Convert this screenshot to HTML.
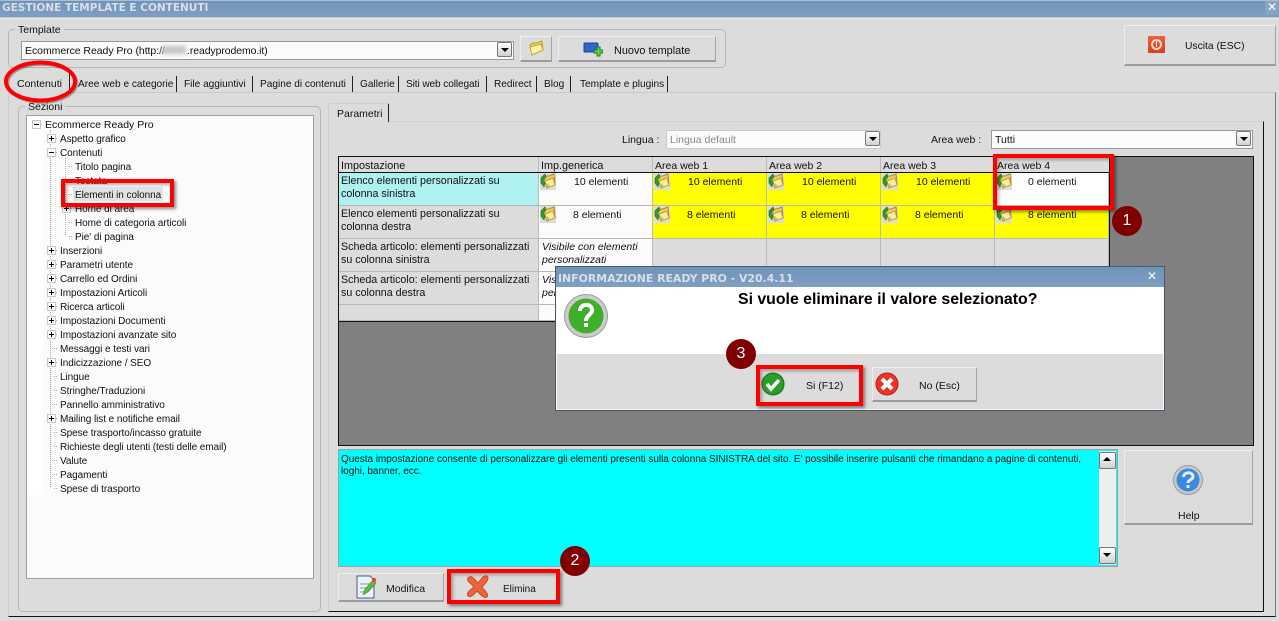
<!DOCTYPE html>
<html><head><meta charset="utf-8"><style>
html,body{margin:0;padding:0;width:1279px;height:621px;overflow:hidden;background:#dcdcdc}
body{position:relative;font:10.5px/14px "Liberation Sans",sans-serif;color:#111}
div,span,svg{position:absolute;box-sizing:border-box}
span{white-space:nowrap}
.w{left:0;top:0;width:0;height:0}
.btn{background:#dcdcdc;border-style:solid;border-width:1px 1px 2px 1px;border-color:#efefef #a3a3a3 #9c9c9c #efefef}
.red{border:4px solid #f00;box-shadow:2px 2px 3px rgba(0,0,0,.45),inset 2px 2px 3px rgba(0,0,0,.3)}
.badge{width:30px;height:30px;border-radius:50%;background:#800000;color:#fff;font-size:16px;line-height:29px;text-align:center}
.arr{width:15px;height:15px;border:1px solid #777;border-radius:2px;background:linear-gradient(#fff,#d0d0d0)}
.arr:after{content:"";position:absolute;left:3px;top:5px;border:4px solid transparent;border-top:4px solid #000;border-bottom:0}
.up:after{border-top:0;border-bottom:4px solid #000;top:4px}
.c{border-right:1px solid #b9b9b9;border-bottom:1px solid #b9b9b9}
.tab{top:76px;height:16px;border-right:1px solid #222}
.ic{width:16px;height:17px;background:#dcdcdc}
</style></head><body>
<svg width="0" height="0" style="left:0;top:0"><defs>
<symbol id="fold" viewBox="0 0 16 17"><path d="M4 6 L6 3 L9 3 L14 1 L15 11 L7 15 Z" fill="#e9cf66" stroke="#b88a1e"/><path d="M5 8 L13 5 L15 12 L7 15 Z" fill="#f8ef9e" stroke="#c79a2a"/><path d="M5 1 L1 5 L1 10 L4 14 L5 10 L3 7 L6 4 Z" fill="#2f9e2f" stroke="#1c6f1c" stroke-width=".6"/><path d="M7 10 L10 13 L7 14 Z" fill="#9ecf72"/></symbol>
</defs></svg>

<!-- title bar -->
<div style="left:0;top:0;width:1279px;height:19px;background:linear-gradient(#a9bdd4 0,#a9bdd4 1px,#6f93ba 1px,#7f9fc2 17px,#eee 18px)"></div>
<span style="left:2px;top:1px;font:bold 10.5px/15px 'DejaVu Sans',sans-serif;color:#d8dfe8">GESTIONE TEMPLATE E CONTENUTI</span>
<div style="left:1265px;top:1px;width:13px;height:13px;background:#8aa6c6"></div>
<span style="left:1267px;top:0;font:bold 12px/14px 'DejaVu Sans',sans-serif;color:#fff">✕</span>

<!-- template group -->
<div style="left:8px;top:29px;width:718px;height:39px;border:1px solid #b5b5b5;border-radius:5px"></div>
<span style="left:15px;top:23px;background:#dcdcdc;padding:0 3px">Template</span>
<div style="left:21px;top:41px;width:493px;height:19px;background:#fbfbfb;border:1px solid #999"></div>
<span style="left:25px;top:44px;letter-spacing:-.05px">Ecommerce Ready Pro (http://</span>
<div style="left:162px;top:46px;width:24px;height:8px;background:#c4c4c4;filter:blur(2px)"></div>
<span style="left:187px;top:44px;letter-spacing:-.1px">.readyprodemo.it)</span>
<div class="arr" style="left:497px;top:42px"></div>
<div class="btn" style="left:520px;top:36px;width:32px;height:26px"></div>
<svg style="left:528px;top:40px" width="16" height="16" viewBox="0 0 16 16"><path d="M2 5 L5 3 L8 3 L14 1 L15 10 L4 15 Z" fill="#e8cf5e" stroke="#c8981e"/><path d="M2 7 L13 4 L15 10 L4 15 Z" fill="#fbf2a6" stroke="#d3a62c"/></svg>
<div class="btn" style="left:558px;top:36px;width:158px;height:26px"></div>
<svg style="left:583px;top:42px" width="20" height="16" viewBox="0 0 20 16"><rect x="1" y="1" width="14" height="9" rx="1" fill="#2b68c8" stroke="#1d3f8a"/><path d="M11 8h3V5h3v3h3v3h-3v3h-3v-3h-3z" fill="#5fd14a" stroke="#1f7d1f"/></svg>
<span style="left:614px;top:44px;font-size:10.9px">Nuovo template</span>

<!-- exit -->
<div class="btn" style="left:1124px;top:25px;width:152px;height:41px"></div>
<div style="left:1148px;top:36px;width:17px;height:17px;background:linear-gradient(#f0603a,#d8401f);border-radius:1px"></div>
<div style="left:1151px;top:39px;width:11px;height:11px;border:2px solid #fbd8cc;border-radius:50%"></div>
<div style="left:1156px;top:41px;width:1px;height:6px;background:#fff"></div>
<span style="left:1185px;top:40px;font-size:10.3px">Uscita (ESC)</span>

<!-- outer page -->
<div style="left:8px;top:92px;width:1268px;height:525px;border:1px solid #cacaca;border-right-color:#777;border-bottom:1px solid #111"></div>

<!-- tabs -->
<div class="tab" style="left:8px;top:73px;width:62px;height:20px;background:#dcdcdc"></div>
<div class="tab" style="left:72px;width:105px"></div>
<div class="tab" style="left:178px;width:75px"></div>
<div class="tab" style="left:254px;width:99px"></div>
<div class="tab" style="left:354px;width:45px"></div>
<div class="tab" style="left:400px;width:87px"></div>
<div class="tab" style="left:488px;width:49px"></div>
<div class="tab" style="left:538px;width:33px"></div>
<div class="tab" style="left:572px;width:96px"></div>
<div class="w" style="font-size:10.1px">
<span style="left:17px;top:77px;font-size:10.5px">Contenuti</span>
<span style="left:78px;top:78px">Aree web e categorie</span>
<span style="left:184px;top:78px">File aggiuntivi</span>
<span style="left:260px;top:78px">Pagine di contenuti</span>
<span style="left:360px;top:78px">Gallerie</span>
<span style="left:406px;top:78px;letter-spacing:-.1px">Siti web collegati</span>
<span style="left:494px;top:78px">Redirect</span>
<span style="left:544px;top:78px">Blog</span>
<span style="left:580px;top:78px">Template e plugins</span>
</div>

<!-- sections -->
<div style="left:18px;top:106px;width:303px;height:506px;border:1px solid #b5b5b5;border-radius:5px"></div>
<span style="left:25px;top:100px;background:#dcdcdc;padding:0 3px">Sezioni</span>
<div style="left:26px;top:115px;width:288px;height:464px;background:#fbfbfb;border:1px solid #a0a0a0"></div>
<div style="left:27px;top:116px;width:16px;height:379px;background:#fff"></div>

<svg style="left:26px;top:115px" width="100" height="390" viewBox="26 115 100 390">
<g stroke="#aaa" stroke-dasharray="1 1" fill="none">
<path d="M50.5 130V488M65.5 158V236M39 124.5h4M54 138.500h4M54 152.500h4M69 166.500h4M69 180.500h4M69 194.500h4M69 208.500h4M69 222.500h4M69 236.500h4M54 250.500h4M54 264.500h4M54 278.500h4M54 292.500h4M54 306.500h4M54 320.500h4M54 334.500h4M54 348.500h4M54 362.500h4M54 376.500h4M54 390.500h4M54 404.500h4M54 418.500h4M54 432.500h4M54 446.500h4M54 460.500h4M54 474.500h4M54 488.500h4"/>
</g>
<g fill="#fff" stroke="#c8c8c8"><rect x="32.500" y="120.500" width="8" height="8"/><rect x="47.500" y="134.500" width="8" height="8"/><rect x="47.500" y="148.500" width="8" height="8"/><rect x="62.500" y="204.500" width="8" height="8"/><rect x="47.500" y="246.500" width="8" height="8"/><rect x="47.500" y="260.500" width="8" height="8"/><rect x="47.500" y="274.500" width="8" height="8"/><rect x="47.500" y="288.500" width="8" height="8"/><rect x="47.500" y="302.500" width="8" height="8"/><rect x="47.500" y="316.500" width="8" height="8"/><rect x="47.500" y="330.500" width="8" height="8"/><rect x="47.500" y="358.500" width="8" height="8"/><rect x="47.500" y="414.500" width="8" height="8"/></g>
<path stroke="#000" fill="none" d="M34 124.500h5M49 138.500h5M51.500 136v5M49 152.500h5M64 208.500h5M66.500 206v5M49 250.500h5M51.500 248v5M49 264.500h5M51.500 262v5M49 278.500h5M51.500 276v5M49 292.500h5M51.500 290v5M49 306.500h5M51.500 304v5M49 320.500h5M51.500 318v5M49 334.500h5M51.500 332v5M49 362.500h5M51.500 360v5M49 418.500h5M51.500 416v5"/>
</svg>

<div style="left:73px;top:187px;width:90px;height:14px;background:#e2e2e2"></div>
<span style="left:45px;top:118px">Ecommerce Ready Pro</span>
<div class="w" style="top:3px;font-size:10px;letter-spacing:-.06px">
<span style="left:60px;top:130px">Aspetto grafico</span>
<span style="left:60px;top:144px">Contenuti</span>
<span style="left:75px;top:158px">Titolo pagina</span>
<span style="left:75px;top:172px">Testata</span>
<span style="left:75px;top:186px">Elementi in colonna</span>
<span style="left:75px;top:200px">Home di area</span>
<span style="left:75px;top:214px">Home di categoria articoli</span>
<span style="left:75px;top:228px">Pie' di pagina</span>
<span style="left:60px;top:242px">Inserzioni</span>
<span style="left:60px;top:256px">Parametri utente</span>
<span style="left:60px;top:270px">Carrello ed Ordini</span>
<span style="left:60px;top:284px">Impostazioni Articoli</span>
<span style="left:60px;top:298px">Ricerca articoli</span>
<span style="left:60px;top:312px">Impostazioni Documenti</span>
<span style="left:60px;top:326px">Impostazioni avanzate sito</span>
<span style="left:60px;top:340px">Messaggi e testi vari</span>
<span style="left:60px;top:354px">Indicizzazione / SEO</span>
<span style="left:60px;top:368px">Lingue</span>
<span style="left:60px;top:382px">Stringhe/Traduzioni</span>
<span style="left:60px;top:396px">Pannello amministrativo</span>
<span style="left:60px;top:410px">Mailing list e notifiche email</span>
<span style="left:60px;top:424px">Spese trasporto/incasso gratuite</span>
<span style="left:60px;top:438px;letter-spacing:-.1px">Richieste degli utenti (testi delle email)</span>
<span style="left:60px;top:452px">Valute</span>
<span style="left:60px;top:466px">Pagamenti</span>
<span style="left:60px;top:480px">Spese di trasporto</span>
</div>

<!-- inner page -->
<div style="left:328px;top:121px;width:936px;height:491px;border:1px solid #d0d0d0;border-right:1px solid #111;border-bottom:1px solid #111"></div>
<div style="left:328px;top:103px;width:61px;height:19px;background:#dcdcdc;border:1px solid #cfcfcf;border-right:1px solid #222;border-bottom:0;border-radius:2px 2px 0 0"></div>
<span style="left:337px;top:107px">Parametri</span>

<span style="left:622px;top:133px">Lingua :</span>
<div style="left:666px;top:130px;width:215px;height:19px;background:#fbfbfb;border:1px solid #cfcbb8"></div>
<span style="left:670px;top:133px;color:#8a8a8a">Lingua default</span>
<div class="arr" style="left:865px;top:131px"></div>
<span style="left:931px;top:133px">Area web :</span>
<div style="left:991px;top:130px;width:262px;height:19px;background:#fbfbfb;border:1px solid #999"></div>
<span style="left:995px;top:133px">Tutti</span>
<div class="arr" style="left:1236px;top:131px"></div>

<!-- grid -->
<div style="left:338px;top:156px;width:916px;height:290px;background:#808080;border:1px solid #111"></div>
<div style="left:339px;top:157px;width:771px;height:165px;background:#dcdcdc;border-right:1px solid #111;border-bottom:1px solid #111"></div>
<div style="left:339px;top:172px;width:771px;height:1px;background:#111"></div>
<div style="left:538px;top:157px;width:1px;height:15px;background:#bbb"></div>
<div style="left:652px;top:157px;width:1px;height:15px;background:#bbb"></div>
<div style="left:766px;top:157px;width:1px;height:15px;background:#bbb"></div>
<div style="left:880px;top:157px;width:1px;height:15px;background:#bbb"></div>
<div style="left:994px;top:157px;width:1px;height:15px;background:#bbb"></div>

<!-- rows background -->
<div class="c" style="left:339px;top:173px;width:200px;height:33px;background:#aff0f0"></div>
<div class="c" style="left:539px;top:173px;width:114px;height:33px;background:#fbfbfb"></div>
<div class="c" style="left:653px;top:173px;width:114px;height:33px;background:#ff0"></div>
<div class="c" style="left:767px;top:173px;width:114px;height:33px;background:#ff0"></div>
<div class="c" style="left:881px;top:173px;width:114px;height:33px;background:#ff0"></div>
<div class="c" style="left:995px;top:173px;width:114px;height:33px;background:#fff"></div>
<div class="c" style="left:339px;top:206px;width:200px;height:33px"></div>
<div class="c" style="left:539px;top:206px;width:114px;height:33px;background:#fbfbfb"></div>
<div class="c" style="left:653px;top:206px;width:114px;height:33px;background:#ff0"></div>
<div class="c" style="left:767px;top:206px;width:114px;height:33px;background:#ff0"></div>
<div class="c" style="left:881px;top:206px;width:114px;height:33px;background:#ff0"></div>
<div class="c" style="left:995px;top:206px;width:114px;height:33px;background:#ff0"></div>
<div class="c" style="left:339px;top:239px;width:200px;height:33px"></div>
<div class="c" style="left:539px;top:239px;width:114px;height:33px;background:#fbfbfb"></div>
<div class="c" style="left:653px;top:239px;width:114px;height:33px"></div>
<div class="c" style="left:767px;top:239px;width:114px;height:33px"></div>
<div class="c" style="left:881px;top:239px;width:114px;height:33px"></div>
<div class="c" style="left:995px;top:239px;width:114px;height:33px"></div>
<div class="c" style="left:339px;top:272px;width:200px;height:33px"></div>
<div class="c" style="left:539px;top:272px;width:114px;height:33px;background:#fbfbfb"></div>
<div class="c" style="left:339px;top:305px;width:200px;height:16px"></div>
<div class="c" style="left:539px;top:305px;width:114px;height:16px;background:#fbfbfb"></div>

<!-- row text -->
<div class="w" style="top:1px">
<span style="left:341px;top:158px;font-size:10.8px">Impostazione</span>
<span style="left:541px;top:158px;font-size:10.8px">Imp.generica</span>
<span style="left:655px;top:158px">Area web 1</span>
<span style="left:769px;top:158px">Area web 2</span>
<span style="left:883px;top:158px">Area web 3</span>
<span style="left:997px;top:158px">Area web 4</span>
<span style="left:341px;top:174px;line-height:13px;font-size:10.7px">Elenco elementi personalizzati su<br>colonna sinistra</span>
<span style="left:341px;top:207px;line-height:13px;font-size:10.7px">Elenco elementi personalizzati su<br>colonna destra</span>
<span style="left:341px;top:240px;line-height:13px;font-size:10.7px">Scheda articolo: elementi personalizzati<br>su colonna sinistra</span>
<span style="left:341px;top:273px;line-height:13px;font-size:10.7px">Scheda articolo: elementi personalizzati<br>su colonna destra</span>
<span style="left:542px;top:240px;line-height:13px;font-style:italic">Visibile con elementi<br>personalizzati</span>
<span style="left:542px;top:273px;line-height:13px;font-style:italic">Visibile con elementi<br>personalizzati</span>
<span style="left:574px;top:174px">10 elementi</span>
<span style="left:688px;top:174px">10 elementi</span>
<span style="left:802px;top:174px">10 elementi</span>
<span style="left:916px;top:174px">10 elementi</span>
<span style="left:1028px;top:174px">0 elementi</span>
<span style="left:573px;top:207px">8 elementi</span>
<span style="left:687px;top:207px">8 elementi</span>
<span style="left:801px;top:207px">8 elementi</span>
<span style="left:915px;top:207px">8 elementi</span>
<span style="left:1028px;top:207px">8 elementi</span>
</div>

<!-- icons -->
<div class="ic" style="left:540px;top:173px"></div><svg style="left:540px;top:173px" width="16" height="17"><use href="#fold"/></svg>
<div class="ic" style="left:654px;top:173px"></div><svg style="left:654px;top:173px" width="16" height="17"><use href="#fold"/></svg>
<div class="ic" style="left:768px;top:173px"></div><svg style="left:768px;top:173px" width="16" height="17"><use href="#fold"/></svg>
<div class="ic" style="left:882px;top:173px"></div><svg style="left:882px;top:173px" width="16" height="17"><use href="#fold"/></svg>
<div class="ic" style="left:996px;top:173px"></div><svg style="left:996px;top:173px" width="16" height="17"><use href="#fold"/></svg>
<div class="ic" style="left:540px;top:206px"></div><svg style="left:540px;top:206px" width="16" height="17"><use href="#fold"/></svg>
<div class="ic" style="left:654px;top:206px"></div><svg style="left:654px;top:206px" width="16" height="17"><use href="#fold"/></svg>
<div class="ic" style="left:768px;top:206px"></div><svg style="left:768px;top:206px" width="16" height="17"><use href="#fold"/></svg>
<div class="ic" style="left:882px;top:206px"></div><svg style="left:882px;top:206px" width="16" height="17"><use href="#fold"/></svg>
<div class="ic" style="left:996px;top:206px"></div><svg style="left:996px;top:206px" width="16" height="17"><use href="#fold"/></svg>

<!-- description -->
<div style="left:338px;top:449px;width:780px;height:118px;background:#0ff;border:1px solid #a0a0a0"></div>
<span style="left:341px;top:454px;font-size:10px;letter-spacing:-.04px;line-height:12px">Questa impostazione consente di personalizzare gli elementi presenti sulla colonna SINISTRA del sito. E' possibile inserire pulsanti che rimandano a pagine di contenuti,<br>loghi, banner, ecc.</span>
<div style="left:1099px;top:451px;width:17px;height:114px;background:#eee"></div>
<div class="arr up" style="left:1099px;top:452px;width:17px;height:17px"></div>
<div class="arr" style="left:1099px;top:547px;width:17px;height:17px"></div>

<div class="btn" style="left:1124px;top:450px;width:129px;height:75px"></div>
<svg style="left:1173px;top:465px" width="30" height="30" viewBox="0 0 30 30"><circle cx="15" cy="15" r="14.500" fill="#c9c9c9" stroke="#999"/><circle cx="15" cy="15" r="11.500" fill="#3a8ae0"/><path d="M10.500 12 C10.500 6.500 20 6.500 20 11.500 C20 15 15 14.500 15 18" fill="none" stroke="#e8eef8" stroke-width="3"/><rect x="13.500" y="20" width="3" height="3" fill="#e8eef8"/></svg>
<span style="left:1178px;top:509px">Help</span>

<!-- bottom buttons -->
<div class="btn" style="left:338px;top:573px;width:106px;height:29px"></div>
<svg style="left:355px;top:575px" width="22" height="24" viewBox="0 0 22 24"><path d="M2 1h13l4 4v18H2z" fill="#eef2fa" stroke="#44608c"/><path d="M5 9h9M5 13h6M5 17h5" stroke="#b6c4dc" stroke-width="2"/><path d="M8 20l2-6 8-9 3 3-8 9z" fill="#5cbf3a" stroke="#3c8d22" stroke-width=".6"/><circle cx="19" cy="5" r="2.200" fill="#e24a3a"/></svg>
<span style="left:386px;top:582px">Modifica</span>
<div class="btn" style="left:449px;top:572px;width:109px;height:30px"></div>
<svg style="left:466px;top:575px" width="24" height="23" viewBox="0 0 24 23"><path d="M2 3 C5 0 7 2 12 8 C16 3 18 0 21 1 C24 3 20 8 16 12 C19 16 23 19 21 22 C18 24 15 20 11 16 C7 20 5 23 2 21 C0 18 4 15 8 12 C5 8 0 6 2 3Z" fill="#f0623a" stroke="#c94a24"/></svg>
<span style="left:503px;top:583px;font-size:10px">Elimina</span>
<div class="red" style="left:447px;top:569px;width:113px;height:35px;background:transparent"></div>

<!-- annotations -->
<svg style="left:0;top:55px" width="90" height="55"><ellipse cx="42" cy="28" rx="34.500" ry="19" fill="none" stroke="rgba(0,0,0,.3)" stroke-width="3.500"/><ellipse cx="40.500" cy="26.500" rx="34.500" ry="19" fill="none" stroke="#f00" stroke-width="4"/></svg>
<div class="red" style="left:61px;top:179px;width:113px;height:28px"></div>
<div class="red" style="left:993px;top:154px;width:121px;height:56px"></div>
<div class="badge" style="left:1112px;top:206px">1</div>
<div class="badge" style="left:560px;top:546px">2</div>

<!-- dialog -->
<div style="left:555px;top:266px;width:610px;height:145px;background:#dcdcdc;border:1px solid #4a5a6e;box-shadow:inset 0 0 0 1px #f4f4f4"></div>
<div style="left:556px;top:267px;width:608px;height:20px;background:linear-gradient(#6f93ba,#7f9fc2)"></div>
<span style="left:558px;top:272px;font:bold 10.9px/14px 'DejaVu Sans',sans-serif;color:#d8dfe8">INFORMAZIONE READY PRO - V20.4.11</span>
<span style="left:1147px;top:269px;font:bold 12px/14px 'DejaVu Sans',sans-serif;color:#fff">✕</span>
<div style="left:557px;top:287px;width:606px;height:67px;background:#fff"></div>
<span style="left:738px;top:291px;font:bold 15.85px/17px 'Liberation Sans',sans-serif;color:#000">Si vuole eliminare il valore selezionato?</span>
<svg style="left:564px;top:294px" width="44" height="44" viewBox="0 0 44 44"><circle cx="22" cy="22" r="21.500" fill="#ccc" stroke="#999"/><circle cx="22" cy="22" r="17.500" fill="#3fae2a"/><path d="M16 17 C16 9 28 9 28 16 C28 21 22 21 22 27" fill="none" stroke="#fff" stroke-width="4"/><rect x="20" y="29" width="4" height="4" fill="#fff"/></svg>

<div class="btn" style="left:758px;top:367px;width:103px;height:37px"></div>
<svg style="left:761px;top:372px" width="24" height="24" viewBox="0 0 24 24"><circle cx="12" cy="12" r="11" fill="#2a9e2a" stroke="#1c6f1c"/><path d="M6 12l4 5 8-9" fill="none" stroke="#fff" stroke-width="3.500"/></svg>
<span style="left:806px;top:379px">Si (F12)</span>
<div class="red" style="left:756px;top:365px;width:107px;height:41px"></div>
<div class="btn" style="left:872px;top:367px;width:105px;height:35px"></div>
<svg style="left:875px;top:372px" width="24" height="24" viewBox="0 0 24 24"><circle cx="12" cy="12" r="11" fill="#e8342a" stroke="#b81e18"/><path d="M7 7l10 10M17 7L7 17" stroke="#fff" stroke-width="4"/></svg>
<span style="left:919px;top:379px">No (Esc)</span>
<div class="badge" style="left:726px;top:339px">3</div>
</body></html>
